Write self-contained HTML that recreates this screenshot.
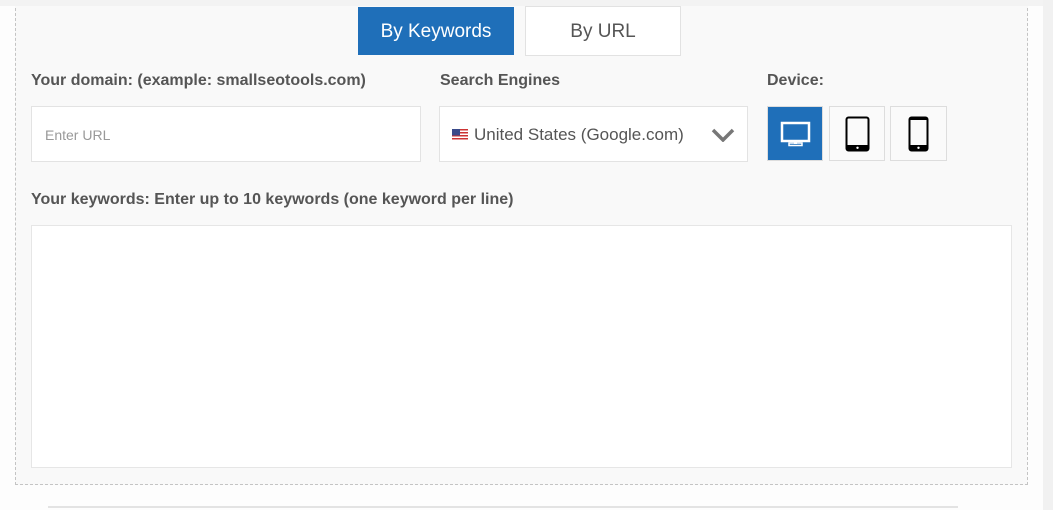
<!DOCTYPE html>
<html><head><style>
body{margin:0;width:1053px;height:510px;background:#fdfdfd;font-family:"Liberation Sans",sans-serif;position:relative;overflow:hidden}
.abs{position:absolute;box-sizing:border-box}
.lbl{position:absolute;font-size:16px;font-weight:bold;color:#555}
</style></head><body>
<div class="abs" style="left:1043px;top:0;width:10px;height:510px;background:#f1f1f1"></div>
<div class="abs" style="left:15px;top:-2px;width:1013px;height:487px;border:1px dashed #c4c4c4;border-top:none;background:#f9f9f9"></div>
<div class="abs" style="left:0;top:0;width:1043px;height:6px;background:#f3f3f3"></div>
<div class="abs" style="left:358px;top:7px;width:156px;height:48px;background:#1f6fb9;color:#fff;font-size:19px;text-align:center;line-height:50px">By Keywords</div>
<div class="abs" style="left:525px;top:6px;width:156px;height:50px;background:#fff;border:1px solid #e2e2e2;color:#555;font-size:19px;text-align:center;line-height:50px">By URL</div>
<div class="lbl" style="left:31px;top:72px">Your domain: (example: smallseotools.com)</div>
<div class="lbl" style="left:440px;top:72px">Search Engines</div>
<div class="lbl" style="left:767px;top:72px">Device:</div>
<div class="abs" style="left:31px;top:106px;width:390px;height:56px;background:#fff;border:1px solid #e3e3e3;color:#999;font-size:14px;line-height:56px;padding-left:13px">Enter URL</div>
<div class="abs" style="left:439px;top:106px;width:309px;height:56px;background:#fff;border:1px solid #e3e3e3;color:#555;font-size:17px;line-height:55px;padding-left:34px">United States (Google.com)
<svg class="abs" style="left:12px;top:22px" width="16" height="12"><rect width="16" height="12" fill="#fff"/><g fill="#c33"><rect y="0" width="16" height="1.5"/><rect y="3" width="16" height="1.5"/><rect y="6" width="16" height="1.5"/><rect y="9" width="16" height="1.5"/></g><rect width="8" height="6.5" fill="#3a4a8a"/></svg>
<svg class="abs" style="left:271px;top:21px" width="24" height="14"><path d="M2 2L12 12L22 2" stroke="#777" stroke-width="3.5" fill="none"/></svg>
</div>
<div class="abs" style="left:767px;top:106px;width:56px;height:55px;background:#1f6fb9;border:1px solid #ddd">
<svg class="abs" style="left:12px;top:14px" width="31" height="26"><rect x="2" y="2" width="27" height="18" stroke="#fff" stroke-width="2.5" fill="none"/><rect x="9" y="22" width="13" height="2.5" fill="none" stroke="#fff" stroke-width="1.5"/><rect x="14" y="19" width="3" height="4" fill="#fff"/></svg>
</div>
<div class="abs" style="left:829px;top:106px;width:56px;height:55px;background:#fafafa;border:1px solid #ddd">
<svg class="abs" style="left:15px;top:9px" width="26" height="36"><rect x="1.5" y="1.5" width="22" height="33" rx="2" stroke="#000" stroke-width="2" fill="none"/><rect x="1.5" y="29" width="22" height="5.5" fill="#000"/><circle cx="12.5" cy="31.8" r="1.2" fill="#fff"/></svg>
</div>
<div class="abs" style="left:890px;top:106px;width:57px;height:55px;background:#fafafa;border:1px solid #ddd">
<svg class="abs" style="left:17px;top:9px" width="22" height="36"><rect x="1.5" y="1.5" width="18" height="33" rx="2" stroke="#000" stroke-width="2" fill="none"/><rect x="1.5" y="1.5" width="18" height="2.5" fill="#000"/><rect x="1.5" y="29" width="18" height="5.5" fill="#000"/><circle cx="10.5" cy="31.8" r="1.2" fill="#fff"/></svg>
</div>
<div class="lbl" style="left:31px;top:191px">Your keywords: Enter up to 10 keywords (one keyword per line)</div>
<div class="abs" style="left:31px;top:225px;width:981px;height:243px;background:#fff;border:1px solid #e6e6e6"></div>
<div class="abs" style="left:48px;top:506px;width:910px;height:2px;background:#e3e3e3"></div>
</body></html>
